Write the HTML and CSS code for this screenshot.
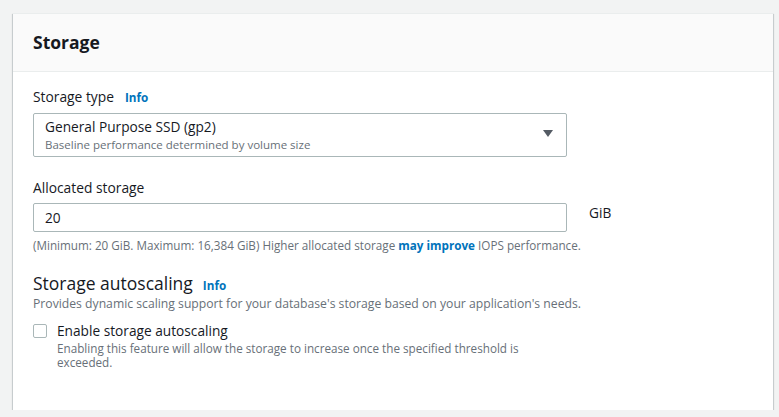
FILE: index.html
```html
<!DOCTYPE html>
<html lang="en">
<head>
<meta charset="utf-8">
<title>Storage</title>
<link rel="stylesheet" href="styles.css">
</head>
<body>
<section class="card">
  <header class="card-header">
    <h2 class="card-title">Storage</h2>
  </header>
  <div class="card-body">
    <div class="field">
      <div class="label">Storage type <a class="info" href="#">Info</a></div>
      <div class="select">
        <div class="select-text">
          <div class="select-main">General Purpose SSD (gp2)</div>
          <div class="select-sub">Baseline performance determined by volume size</div>
        </div>
        <span class="caret"></span>
      </div>
    </div>
    <div class="field field-alloc">
      <div class="label">Allocated storage</div>
      <div class="input-row">
        <div class="input">20</div>
        <span class="unit">GiB</span>
      </div>
      <div class="hint">(Minimum: 20 GiB. Maximum: 16,384 GiB) Higher allocated storage <a class="link" href="#">may improve</a> IOPS performance.</div>
    </div>
    <div class="section">
      <div class="section-title">Storage autoscaling <a class="info" href="#">Info</a></div>
      <div class="section-desc">Provides dynamic scaling support for your database's storage based on your application's needs.</div>
      <div class="check-row">
        <span class="checkbox"></span>
        <div class="check-text">
          <div class="check-label">Enable storage autoscaling</div>
          <div class="check-desc">Enabling this feature will allow the storage to increase once the specified threshold is exceeded.</div>
        </div>
      </div>
    </div>
  </div>
</section>
</body>
</html>
```

FILE: styles.css
```css
* { box-sizing: border-box; }
html, body { margin: 0; }
body {
  background: #f2f3f3;
  font-family: "Open Sans", "Noto Sans", sans-serif;
  color: #16191f;
  padding: 13px 6px 0 13px;
}
.card {
  background: #fff;
  width: 760px;
  height: 397px;
  box-shadow: 0 1px 1px 0 rgba(0, 28, 36, 0.35), 1px 1px 1px 0 rgba(0, 28, 36, 0.12), -1px 1px 1px 0 rgba(0, 28, 36, 0.12);
  border-top: 1px solid #eaeded;
}
.card-header {
  background: #fafafa;
  height: 58px;
  border-bottom: 1px solid #eaeded;
  padding: 0 20px;
  display: flex;
  align-items: center;
}
.card-title {
  margin: 0;
  font-size: 17.5px;
  font-weight: 700;
  line-height: 22px;
  padding-bottom: 1px;
}
.card-body {
  padding: 14px 20px 0 20px;
}
.label {
  font-size: 13.8px;
  line-height: 22px;
  display: flex;
  align-items: baseline;
  gap: 11px;
}
.info {
  color: #0073bb;
  font-weight: 700;
  font-size: 11.7px;
  text-decoration: none;
}
.select {
  margin-top: 5px;
  width: 534px;
  height: 44px;
  border: 1px solid #aab7b8;
  border-radius: 2px;
  padding: 3px 13px 3px 11px;
  display: flex;
  align-items: center;
  justify-content: space-between;
}
.select-main {
  font-size: 13.7px;
  line-height: 20px;
}
.select-sub {
  font-size: 11.5px;
  line-height: 16px;
  color: #687078;
}
.caret {
  width: 0;
  height: 0;
  border-left: 5px solid transparent;
  border-right: 5px solid transparent;
  border-top: 7px solid #545b64;
  margin-bottom: 4px;
}
.field-alloc { margin-top: 20px; }
.input-row {
  margin-top: 4px;
  display: flex;
  align-items: flex-start;
}
.input {
  width: 534px;
  height: 29px;
  border: 1px solid #aab7b8;
  border-radius: 2px;
  padding: 0 11px;
  font-size: 13.7px;
  line-height: 27px;
}
.unit {
  margin-left: 22px;
  font-size: 13.7px;
  line-height: 20px;
}
.hint {
  margin-top: 5px;
  font-size: 11.7px;
  line-height: 16px;
  color: #687078;
}
.link {
  color: #0073bb;
  font-weight: 700;
  text-decoration: none;
}
.section { margin-top: 19px; }
.section-title {
  font-size: 17.5px;
  line-height: 22px;
  display: flex;
  align-items: baseline;
  gap: 10px;
}
.section-desc {
  font-size: 12.2px;
  line-height: 16px;
  color: #687078;
}
.check-row {
  margin-top: 9px;
  display: flex;
  align-items: flex-start;
  gap: 10px;
}
.checkbox {
  width: 14px;
  height: 14px;
  border: 1px solid #aab7b8;
  border-radius: 2px;
  margin-top: 3px;
  flex: none;
}
.check-label {
  font-size: 13.7px;
  line-height: 20px;
}
.check-desc {
  font-size: 11.7px;
  line-height: 14px;
  color: #687078;
  width: 500px;
}
```
